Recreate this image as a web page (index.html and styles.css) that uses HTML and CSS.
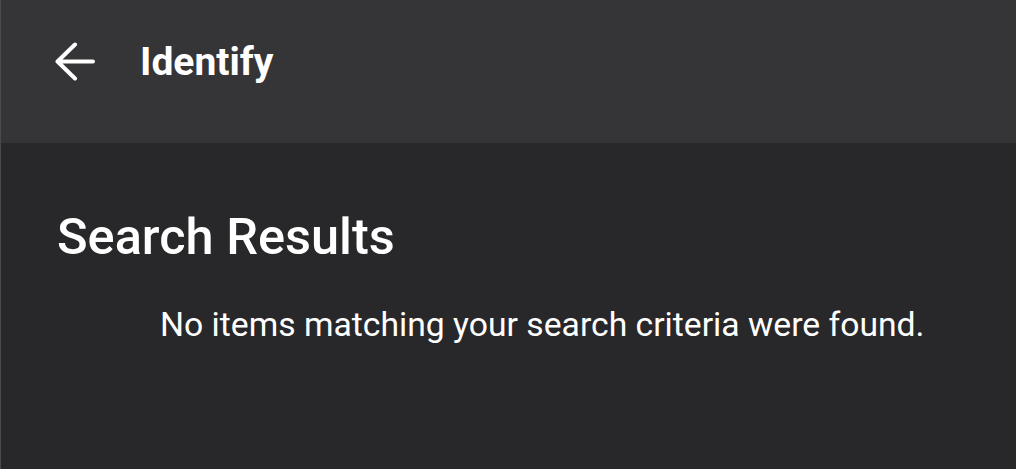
FILE: index.html
```html
<!DOCTYPE html>
<html>
<head>
<meta charset="utf-8">
<link rel="stylesheet" href="styles.css">
</head>
<body>
<div class="app">
  <header class="topbar">
    <button class="back" aria-label="Back">
      <svg width="40" height="40" viewBox="0 0 40 40"><path d="M20 2.5 L2.5 19.5 L20 36.5 M2.5 19.5 H38" fill="none" stroke="#fff" stroke-width="4" stroke-linecap="round" stroke-linejoin="round"/></svg>
    </button>
    <h1 class="title">Identify</h1>
  </header>
  <main class="content">
    <h2 class="heading">Search Results</h2>
    <p class="empty">No items matching your search criteria were found.</p>
  </main>
</div>
</body>
</html>
```
FILE: styles.css
```css
html, body {
  margin: 0;
  padding: 0;
  height: 100%;
  background: #28282a;
}
body {
  font-family: Roboto, "Noto Sans", sans-serif;
  color: #fff;
}
.app {
  height: 100%;
  display: flex;
  flex-direction: column;
  border-left: 1px solid #4a4a4c;
  box-sizing: border-box;
}
.topbar {
  height: 143px;
  flex: none;
  background: #353537;
  display: flex;
  align-items: center;
  padding-left: 54px;
  padding-bottom: 20px;
  box-sizing: border-box;
}
.back {
  background: none;
  border: 0;
  padding: 0;
  width: 40px;
  height: 40px;
  display: flex;
}
.title {
  margin: 0 0 0 45px;
  font-size: 39px;
  font-weight: 700;
  letter-spacing: 0;
}
.content {
  flex: 1;
  padding: 66px 0 0 56px;
}
.heading {
  margin: 0;
  font-size: 50.5px;
  font-weight: 500;
  line-height: 56px;
}
.empty {
  margin: 40px 0 0 103px;
  font-size: 33.7px;
  line-height: 40px;
  font-weight: 400;
}
```
